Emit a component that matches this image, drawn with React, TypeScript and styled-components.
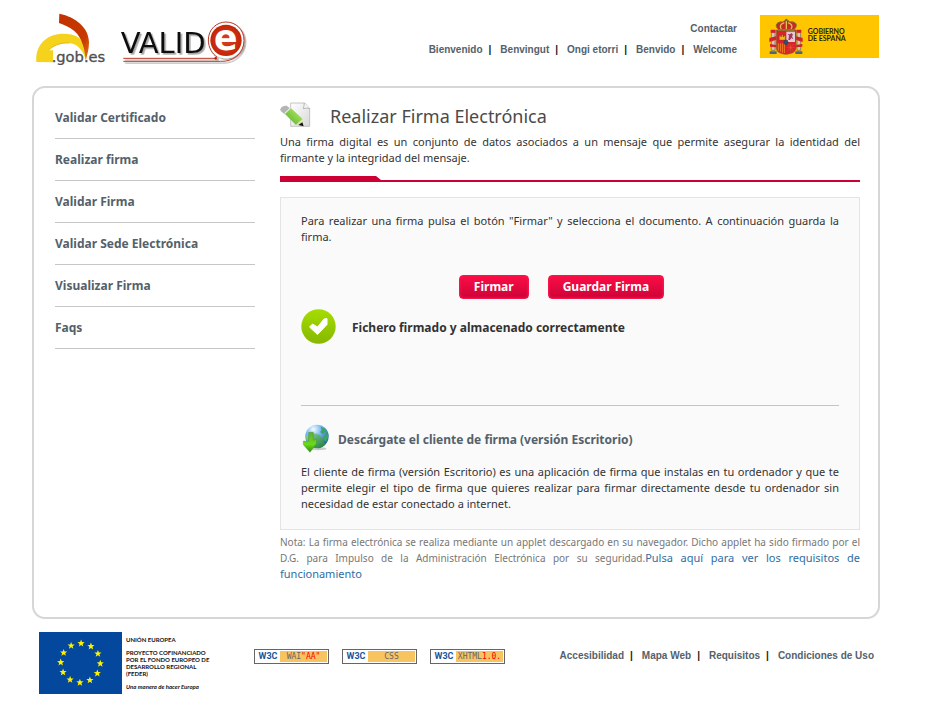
import React from "react";
import styled, { createGlobalStyle } from "styled-components";

const GlobalStyle = createGlobalStyle`
  *, *::before, *::after { box-sizing: border-box; }
  body {
    margin: 0;
    background: #fff;
    color: #333;
    font-family: "Noto Sans", sans-serif;
    font-size: 11px;
    line-height: 16px;
  }
  p, h1, h2, ul { margin: 0; padding: 0; }
  ul { list-style: none; }
  a { text-decoration: none; }
  svg { display: block; flex: none; }
`;

const Page = styled.div`
  padding: 0 63px 0 32px;
`;

const Header = styled.header`
  display: flex;
  align-items: flex-start;
  height: 86px;
  padding: 13px 1px 0 4px;
`;

const Logos = styled.div`
  display: flex;
  gap: 10px;
  margin-right: auto;
`;

const HeaderLinks = styled.div`
  display: flex;
  flex-direction: column;
  align-items: flex-end;
  gap: 5px;
  margin: 8px 23px 0 0;
`;

const Emblem = styled.div`
  margin-top: 2px;
`;

const LinkList = styled.ul`
  display: flex;
  font-family: "Liberation Sans", Arial, sans-serif;
  font-size: 10px;
  font-weight: bold;
  color: #222;
`;

const LinkItem = styled.li`
  white-space: nowrap;

  & + &::before {
    content: "|";
    margin: 0 9px 0 6px;
  }
`;

const PlainLink = styled.a`
  color: #54616a;
`;

const Frame = styled.div`
  display: flex;
  gap: 25px;
  padding: 8px 18px 35px 21px;
  border: 2px solid #d6d6d6;
  border-radius: 13px;
`;

const Menu = styled.nav`
  flex: 0 0 200px;
`;

const MenuList = styled.ul`
  padding-top: 1px;
`;

const MenuLink = styled.a`
  display: block;
  padding: 13px 0 12px;
  border-bottom: 1px solid #c6c6c6;
  color: #54616a;
  font-size: 12px;
  font-weight: bold;
`;

const Main = styled.main`
  flex: 1;
  min-width: 0;
  padding-top: 6px;
`;

const TitleRow = styled.div`
  display: flex;
  align-items: flex-start;
  gap: 18px;
  height: 32px;
`;

const Title = styled.h1`
  padding-top: 2px;
  color: #4a4a4a;
  font-size: 18px;
  font-weight: normal;
  line-height: 24px;
`;

const Text = styled.p`
  text-align: justify;
`;

const TabRule = styled.div`
  height: 6px;
  margin: 10px 0 15px;
  border-bottom: 2px solid #cc0033;

  &::before {
    content: "";
    display: block;
    width: 101px;
    height: 4px;
    background: #cc0033;
    clip-path: polygon(0 0, 96px 0, 100% 100%, 0 100%);
  }
`;

const Panel = styled.section`
  padding: 15px 20px 17px;
  border: 1px solid #e4e4e4;
  background: #fafafa;
`;

const Actions = styled.div`
  display: flex;
  justify-content: center;
  gap: 19px;
  margin: 30px 0 9px;
  padding-right: 17px;
`;

const Action = styled.button`
  height: 24px;
  padding: 0 14px;
  border: 1px solid #f2164a;
  border-radius: 4px;
  background: linear-gradient(#fb0d45, #cd0338);
  box-shadow: inset 0 0 3px #ff1550;
  color: #fff;
  font-family: inherit;
  font-size: 12px;
  font-weight: bold;
  line-height: 16px;
`;

const Status = styled.div`
  display: flex;
  align-items: center;
  gap: 16px;
  height: 36px;
  font-size: 12px;
  font-weight: bold;
`;

const StatusText = styled.p`
  padding-top: 4px;
`;

const Download = styled.div`
  display: flex;
  align-items: center;
  gap: 8px;
  margin-top: 61px;
  padding: 17px 0 11px 1px;
  border-top: 1px solid #c4c4c4;
`;

const DownloadTitle = styled.h2`
  padding-top: 4px;
  font-size: 12px;
  font-weight: bold;
`;

const Note = styled.p`
  margin-top: 4px;
  color: #777;
  font-size: 10px;
  line-height: 16px;
  text-align: justify;
`;

const NoteLink = styled.a`
  color: #2e6da4;
  font-size: 11px;
`;

const Footer = styled.footer`
  display: flex;
  align-items: flex-start;
  padding: 13px 6px 22px 7px;
`;

const Feder = styled.div`
  display: flex;
  gap: 4px;
  width: 215px;
`;

const FederText = styled.div`
  padding-top: 4px;
  color: #111;
  font-family: Lato, sans-serif;
  font-size: 6px;
  font-weight: bold;
  line-height: 7px;
  white-space: nowrap;
`;

const FederLine = styled.p<{ $slogan?: boolean }>`
  margin-bottom: 6px;
  font-style: ${(p) => (p.$slogan ? "italic" : "normal")};
`;

const Badges = styled.div`
  display: flex;
  gap: 13px;
  margin: 17px auto 0 0;
`;

const Badge = styled.a`
  display: flex;
  width: 75px;
  height: 15px;
  padding: 1px;
  border: 1px solid #666;
  color: #1d5495;
  font: bold 9px/11px Roboto, sans-serif;
`;

const BadgeMark = styled.span`
  width: 24px;
  text-align: center;
`;

const BadgeLabel = styled.span`
  flex: 1;
  background: #f8c361;
  color: #666;
  font: 8px/11px "DejaVu Sans Mono", monospace;
  text-align: center;
`;

const BadgeAccent = styled.span`
  color: #f00;
`;

const FooterLinks = styled.div`
  margin-top: 16px;
`;

function GobLogo() {
  return (
    <svg width="72" height="52" viewBox="33 24 216 156" role="img" aria-label=".gob.es">
      <defs>
        <linearGradient id="gobRed" x1="0" y1="0" x2="1" y2="1">
          <stop offset="0" stopColor="#c23100" />
          <stop offset="0.7" stopColor="#c83a00" />
          <stop offset="1" stopColor="#e27a20" />
        </linearGradient>
      </defs>
      <path d="M34 171 C30 120 65 86 116 86 C150 86 170 98 178 124 C183 142 184 154 184 168 C175 138 160 117 133 114 C106 112 84 122 70 136 L84 136 L84 172 Z" fill="#f5d21c" />
      <path d="M103 26 C153 36 192 69 192 112 C192 132 187 150 182 166 C181 139 172 98 148 78 C133 66 118 60 102 54 Z" fill="url(#gobRed)" />
      <path d="M70 136 C84 122 106 112 133 114" fill="none" stroke="#e3b915" strokeWidth="3" />
      <text x="80" y="170" fontFamily="DejaVu Sans, sans-serif" fontSize="44" fill="#505050" stroke="#505050" strokeWidth="1">
        .gob.es
      </text>
    </svg>
  );
}

function ValideLogo() {
  return (
    <svg width="130" height="52" viewBox="279 24 390 156" role="img" aria-label="VALIDe">
      <defs>
        <radialGradient id="valideRed">
          <stop offset="0" stopColor="#d64024" />
          <stop offset="1" stopColor="#c42507" />
        </radialGradient>
        <filter id="valideShadow" x="-10%" y="-10%" width="120%" height="130%">
          <feDropShadow dx="5" dy="5" stdDeviation="2" floodColor="#000" floodOpacity="0.35" />
        </filter>
      </defs>
      <g filter="url(#valideShadow)">
        <text x="287" y="144" fontFamily="DejaVu Sans, sans-serif" fontSize="87" fill="#111">
          VALID
        </text>
        <circle cx="603" cy="106" r="54" fill="#fff" />
        <path d="M295 169 H586 C625 171 657 145 657 106 C657 74 633 51 603 51 C574 51 550 74 550 105 C550 128 562 147 577 157" fill="none" stroke="#b63a28" strokeWidth="3" />
        <path d="M295 160 H572" stroke="#b63a28" strokeWidth="3" />
        <circle cx="572" cy="160" r="4" fill="#a52814" />
      </g>
      <circle cx="603" cy="106" r="47" fill="url(#valideRed)" />
      <text x="602" y="136" fontFamily="DejaVu Sans, sans-serif" fontSize="104" fontWeight="700" textAnchor="middle" fill="#fff">
        e
      </text>
    </svg>
  );
}

function SpainEmblem() {
  return (
    <svg width="119" height="43" viewBox="30 30 357 129" role="img" aria-label="Gobierno de España">
      <path fill="#ffc600" d="M30 30h357v129H30z" />
      <g fill="#d8c9b0" stroke="#6d6156" strokeWidth="2">
        <path d="M64 82h11v54H64zM141 82h11v54h-11z" />
      </g>
      <g fill="#d5202b">
        <path d="M62 74h15v9H62zM139 74h15v9h-15zM58 99l22-6v11l-22 7zM136 93l22 6v12l-22-7zM60 117l19 3v7l-19-2zM137 120l20-3v8l-20 2z" />
      </g>
      <path d="M59 139h21v8H59zM136 139h21v8h-21z" fill="#4b687a" />
      <path d="M79 75 H138 V128 C138 143 122 146 108 148 C94 146 79 143 79 128 Z" fill="#d9222c" stroke="#806040" strokeWidth="2" />
      <path d="M109 80h26v31h-26z" fill="#dfcdd1" />
      <path d="M115 105l2-13-4-5 7 1 4-4 5 5-3 5 4 9-6-4-4 6z" fill="#a73562" />
      <path d="M88 105V92h4v3h3v-6h4v6h3v-3h4v13z" fill="#f4b51d" stroke="#70401a" strokeWidth="1" />
      <path d="M85 115v22M91 115v25M97 115v28M103 115v29" stroke="#f4b51d" strokeWidth="2" />
      <path d="M112 116l20 24M132 116l-20 24M112 128h22M122 116v26" stroke="#cf8b25" strokeWidth="1" fill="none" />
      <ellipse cx="108" cy="112" rx="6" ry="7" fill="#17598a" stroke="#443445" strokeWidth="2" />
      <path d="M86 74 C70 61 83 48 98 51 Q103 46 109 46 Q116 46 120 51 C136 48 147 60 132 74 Z" fill="#c52a25" stroke="#8a7332" strokeWidth="3" />
      <path d="M94 73 C87 63 93 56 103 53M123 73 C130 63 124 56 114 53M109 48v24" stroke="#dfbd55" strokeWidth="4" fill="none" />
      <path d="M84 72h50v6H84z" fill="#96712b" />
      <path d="M109 41v7M105 44h8" stroke="#68582e" strokeWidth="2" />
      <g fontFamily="Lato, sans-serif" fontSize="21" fontWeight="700" fill="#2b2108">
        <text x="173" y="86">GOBIERNO</text>
        <text x="173" y="108">DE ESPAÑA</text>
      </g>
    </svg>
  );
}

function PencilIcon() {
  return (
    <svg width="32" height="26" viewBox="30 37 96 78" aria-hidden="true">
      <defs>
        <linearGradient id="paper" x1="0" y1="0" x2="1" y2="1">
          <stop offset="0" stopColor="#fff" />
          <stop offset="1" stopColor="#d8d8d8" />
        </linearGradient>
        <linearGradient id="pencil" x1="1" y1="0" x2="0" y2="1">
          <stop offset="0" stopColor="#b9f06c" />
          <stop offset="1" stopColor="#55ab25" />
        </linearGradient>
      </defs>
      <path d="M62 40h42l15 16v54H62z" fill="url(#paper)" stroke="#aaa" strokeWidth="2" />
      <path d="M103 40q-1 12-3 17 11-4 19 0" fill="#f7f7f7" stroke="#999" strokeWidth="2" />
      <path d="M31 59Q34 47 50 48L60 56 43 73 32 64Z" fill="#b4b4b4" />
      <path d="M44 69L60 54 66 59 48 76Z" fill="#e9eee4" />
      <path d="M45 73L63 56 98 88 78 106Z" fill="url(#pencil)" />
      <path d="M78 106L98 88 100 109Z" fill="#e5e1bd" />
      <path d="M85 106l12-8 4 12z" fill="#111" />
    </svg>
  );
}

function CheckIcon() {
  return (
    <svg width="35" height="35" viewBox="0 0 35 35" aria-hidden="true">
      <defs>
        <linearGradient id="ok" x1="0" y1="0" x2="0" y2="1">
          <stop offset="0" stopColor="#a5dd00" />
          <stop offset="1" stopColor="#86b800" />
        </linearGradient>
      </defs>
      <circle cx="17.5" cy="17.5" r="17.2" fill="url(#ok)" />
      <path d="M8.500 18l3-3 5 3 6.500-8 3-.5v6l-9.500 10z" fill="#fff" stroke="#fff" strokeWidth="1" strokeLinejoin="round" />
    </svg>
  );
}

function GlobeIcon() {
  return (
    <svg width="28" height="30" viewBox="37 100 84 90" aria-hidden="true">
      <defs>
        <radialGradient id="globe" cx="0.35" cy="0.2" r="0.85">
          <stop offset="0" stopColor="#f4fcff" />
          <stop offset="0.4" stopColor="#75b7ee" />
          <stop offset="1" stopColor="#174f8d" />
        </radialGradient>
        <linearGradient id="arrow" x1="0" y1="0" x2="0" y2="1">
          <stop offset="0" stopColor="#67a93b" />
          <stop offset="0.6" stopColor="#6adb16" />
          <stop offset="1" stopColor="#288a10" />
        </linearGradient>
        <linearGradient id="land" x1="0" y1="0" x2="1" y2="1">
          <stop offset="0" stopColor="#8cd3a5" />
          <stop offset="1" stopColor="#1f7a3d" />
        </linearGradient>
      </defs>
      <ellipse cx="85" cy="177" rx="25" ry="5" fill="#999" opacity="0.5" />
      <circle cx="82" cy="140" r="35" fill="url(#globe)" />
      <path d="M48 139q19-12 40-4l12 12 7 18q-20 19-44 5-13-10-15-31z" fill="url(#land)" />
      <path d="M93 111l14 7 6 12-8-2-5 6-9-7 5-5zM104 137l12-4q1 14-7 24l-8-8z" fill="#39a566" />
      <path d="M57 128h14v24l10-5-1 15-19 26-20-23v-11l16 1z" fill="url(#arrow)" stroke="#338a20" strokeWidth="1" />
    </svg>
  );
}

const starPoints = (cx: number, cy: number) =>
  Array.from({ length: 10 }, (_, i) => {
    const r = i % 2 ? 1.6 : 3.8;
    const a = (Math.PI * i) / 5 - Math.PI / 2;
    return `${cx + r * Math.cos(a)},${cy + r * Math.sin(a)}`;
  }).join(" ");

function EuFlag() {
  return (
    <svg width="83" height="62" viewBox="0 0 83 62" role="img" aria-label="Unión Europea">
      <path fill="#03489c" d="M0 0h83v62H0z" />
      {Array.from({ length: 12 }, (_, i) => {
        const a = (Math.PI * i) / 6 + 0.03;
        return (
          <polygon key={i} points={starPoints(41.5 + 19.8 * Math.sin(a), 31 - 19.6 * Math.cos(a))} fill="#fff200" />
        );
      })}
    </svg>
  );
}

function Links({ items }: { items: string[] }) {
  return (
    <LinkList>
      {items.map((item) => (
        <LinkItem key={item}>
          <PlainLink href="#">{item}</PlainLink>
        </LinkItem>
      ))}
    </LinkList>
  );
}

const menuItems = [
  "Validar Certificado",
  "Realizar firma",
  "Validar Firma",
  "Validar Sede Electrónica",
  "Visualizar Firma",
  "Faqs",
];

const badges = [
  { label: "WAI", accent: '"AA"' },
  { label: "CSS", accent: "" },
  { label: "XHTML", accent: "1.0." },
];

export default function App() {
  return (
    <>
      <GlobalStyle />
      <Page>
        <Header>
          <Logos>
            <GobLogo />
            <ValideLogo />
          </Logos>
          <HeaderLinks>
            <Links items={["Contactar"]} />
            <Links items={["Bienvenido", "Benvingut", "Ongi etorri", "Benvido", "Welcome"]} />
          </HeaderLinks>
          <Emblem>
            <SpainEmblem />
          </Emblem>
        </Header>

        <Frame>
          <Menu>
            <MenuList>
              {menuItems.map((item) => (
                <li key={item}>
                  <MenuLink href="#">{item}</MenuLink>
                </li>
              ))}
            </MenuList>
          </Menu>
          <Main>
            <TitleRow>
              <PencilIcon />
              <Title>Realizar Firma Electrónica</Title>
            </TitleRow>
            <Text>
              Una firma digital es un conjunto de datos asociados a un mensaje que permite asegurar la identidad del
              firmante y la integridad del mensaje.
            </Text>
            <TabRule />
            <Panel>
              <Text>
                Para realizar una firma pulsa el botón "Firmar" y selecciona el documento. A continuación guarda la
                firma.
              </Text>
              <Actions>
                <Action type="button">Firmar</Action>
                <Action type="button">Guardar Firma</Action>
              </Actions>
              <Status role="status">
                <CheckIcon />
                <StatusText>Fichero firmado y almacenado correctamente</StatusText>
              </Status>
              <Download>
                <GlobeIcon />
                <DownloadTitle>
                  <PlainLink href="#">Descárgate el cliente de firma (versión Escritorio)</PlainLink>
                </DownloadTitle>
              </Download>
              <Text>
                El cliente de firma (versión Escritorio) es una aplicación de firma que instalas en tu ordenador y que
                te permite elegir el tipo de firma que quieres realizar para firmar directamente desde tu ordenador sin
                necesidad de estar conectado a internet.
              </Text>
            </Panel>
            <Note>
              Nota: La firma electrónica se realiza mediante un applet descargado en su navegador. Dicho applet ha sido
              firmado por el D.G. para Impulso de la Administración Electrónica por su seguridad.
              <NoteLink href="#">Pulsa aquí para ver los requisitos de funcionamiento</NoteLink>
            </Note>
          </Main>
        </Frame>

        <Footer>
          <Feder>
            <EuFlag />
            <FederText>
              <FederLine>UNIÓN EUROPEA</FederLine>
              <FederLine>
                PROYECTO COFINANCIADO
                <br />
                POR EL FONDO EUROPEO DE
                <br />
                DESARROLLO REGIONAL
                <br />
                (FEDER)
              </FederLine>
              <FederLine $slogan>Una manera de hacer Europa</FederLine>
            </FederText>
          </Feder>
          <Badges>
            {badges.map((badge) => (
              <Badge key={badge.label} href="#">
                <BadgeMark>W3C</BadgeMark>
                <BadgeLabel>
                  {badge.label}
                  <BadgeAccent>{badge.accent}</BadgeAccent>
                </BadgeLabel>
              </Badge>
            ))}
          </Badges>
          <FooterLinks>
            <Links items={["Accesibilidad", "Mapa Web", "Requisitos", "Condiciones de Uso"]} />
          </FooterLinks>
        </Footer>
      </Page>
    </>
  );
}
